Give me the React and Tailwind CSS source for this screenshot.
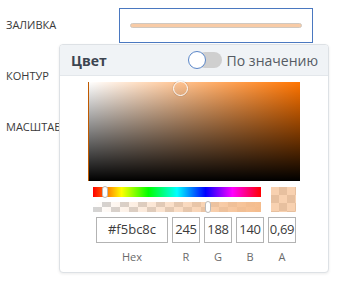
export default function App() {
  const rgb = { r: 245, g: 188, b: 140, a: 0.69 }
  const fields = [
    { label: 'R', value: rgb.r },
    { label: 'G', value: rgb.g },
    { label: 'B', value: rgb.b },
    { label: 'A', value: '0,69' },
  ]

  return (
    <div className="relative w-[339px] h-[285px] bg-white overflow-hidden font-['Open_Sans',sans-serif]">
      {/* settings rows */}
      <div className="flex flex-col pt-[8px]">
        <div className="flex items-center h-[35px]">
          <div className="w-[119px] pl-[6px] text-[11px] text-[#3a3a3a]">ЗАЛИВКА</div>
          <div className="w-[194px] h-[35px] border border-[#4a78c0] flex items-center px-[10px]">
            <div className="w-full h-[5px] rounded-full bg-[#f8cba6] border border-[#d0c8c0]"></div>
          </div>
        </div>
        <div className="flex items-center h-[51px] mt-[16px] -translate-y-[8px]">
          <div className="pl-[6px] text-[11px] text-[#3a3a3a]">КОНТУР</div>
        </div>
        <div className="flex items-center h-[51px] -translate-y-[8px]">
          <div className="pl-[6px] text-[11px] text-[#3a3a3a]">МАСШТАБ</div>
        </div>
      </div>

      {/* color picker popup */}
      <div className="absolute left-[59px] top-[44px] w-[270px] h-[229px] rounded-[4px] border border-[#dde1e5] bg-white shadow-[0_1px_3px_rgba(0,0,0,0.08)] overflow-hidden">
        <div className="h-[31px] bg-[#f0f3f6] border-b border-[#e3e7eb] flex items-center pl-[11px] pr-[10px]">
          <span className="text-[14px] font-bold text-[#3c4450]">Цвет</span>
          <div className="ml-auto flex items-center">
            <div className="relative w-[34px] h-[18px]">
              <div className="absolute left-[9px] right-0 top-[1px] h-[16px] rounded-full bg-[#cfcfcf]"></div>
              <div className="absolute left-0 top-0 w-[18px] h-[18px] rounded-full bg-white border border-[#5a86c8]"></div>
            </div>
            <span className="ml-[5px] text-[14px] text-[#555b63]">По значению</span>
          </div>
        </div>

        <div className="flex flex-col pt-[6px]">
          {/* saturation / value */}
          <div className="relative ml-[28px] w-[212px] h-[99px] bg-[linear-gradient(to_right,#fff,#ff7400)] border-l border-[#c05a00]">
            <div className="absolute inset-0 bg-[linear-gradient(to_bottom,transparent,#000)]"></div>
            <div className="absolute left-[84px] top-0 w-[15px] h-[15px] -translate-y-[1px] rounded-full border-[1.5px] border-white shadow-[0_0_1px_rgba(0,0,0,0.5)]"></div>
          </div>

          <div className="flex mt-[6px] ml-[33px]">
            <div className="flex flex-col w-[168px] gap-[5px]">
              <div className="relative h-[10px] bg-[linear-gradient(to_right,#f00,#ff0_17%,#0f0_33%,#0ff_50%,#00f_67%,#f0f_83%,#f00)]">
                <div className="absolute left-[9px] top-[-1px] w-[6px] h-[12px] rounded-[3px] bg-white border border-[#bbb]"></div>
              </div>
              <div className="relative h-[10px] bg-[conic-gradient(#d4d4d4_25%,#fff_0_50%,#d4d4d4_0_75%,#fff_0)] bg-[length:18px_10px]">
                <div className="absolute inset-0 bg-[linear-gradient(to_right,rgba(245,188,140,0),rgba(245,188,140,1))]"></div>
                <div className="absolute left-[112px] top-[-1px] w-[6px] h-[12px] rounded-[3px] bg-white border border-[#bbb]"></div>
              </div>
            </div>
            <div className="relative ml-[10px] w-[25px] h-[25px] bg-[conic-gradient(#c8c8c8_25%,#fff_0_50%,#c8c8c8_0_75%,#fff_0)] bg-[length:16px_16px]">
              <div className="absolute inset-0 bg-[rgba(245,188,140,0.69)]"></div>
            </div>
          </div>

          <div className="flex ml-[36px] mt-[5px] gap-[4px]">
            <div className="flex flex-col items-center">
              <div className="w-[72px] h-[26px] border border-[#b3b3b3] flex items-center justify-center text-[13px] text-[#3c3c3c]">#f5bc8c</div>
              <div className="mt-[6px] text-[11px] text-[#6a6a6a]">Hex</div>
            </div>
            {fields.map((f) => (
              <div key={f.label} className="flex flex-col items-center">
                <div className="w-[28px] h-[26px] border border-[#b3b3b3] flex items-center justify-center text-[13px] text-[#3c3c3c] tracking-[-0.3px]">{f.value}</div>
                <div className="mt-[6px] text-[11px] text-[#6a6a6a]">{f.label}</div>
              </div>
            ))}
          </div>
        </div>
      </div>
    </div>
  )
}
